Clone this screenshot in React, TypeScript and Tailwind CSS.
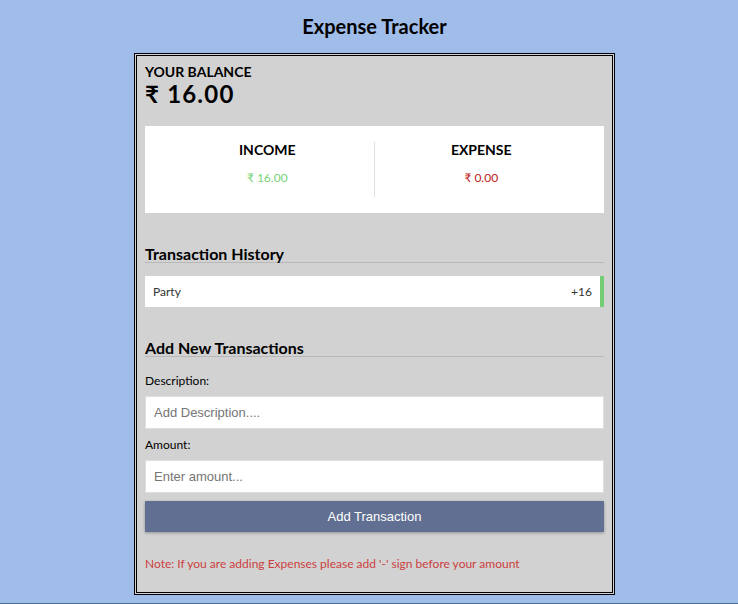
import { useState } from "react";

const headingClass = "mt-[33px] border-b border-[#b8b8b8] text-base leading-4 font-bold";
const labelClass = "block text-xs leading-4";
const inputClass =
  "mt-[7px] block h-[33px] w-full border border-[#dedede] bg-white px-2 font-['Liberation_Sans',Arial,sans-serif] text-[13px] text-black outline-none placeholder:text-[#757575]";

const transactions = [{ id: 1, text: "Party", amount: "+16" }];

export default function App() {
  const [description, setDescription] = useState("");
  const [amount, setAmount] = useState("");

  return (
    <div className="flex min-h-screen flex-col items-center border-b border-[#4b6a94] bg-[#a0bdea] pt-[14px] pb-2 pl-[11px] font-['Lato',sans-serif] text-black">
      <h1 className="text-xl leading-6 font-bold">Expense Tracker</h1>
      <main className="mt-[15px] w-full max-w-[481px] border-3 border-double border-black bg-[#d2d2d2] px-2 pt-2 pb-5">
        <h2 className="text-sm leading-4 font-bold">YOUR BALANCE</h2>
        <p className="text-2xl leading-7 font-bold tracking-wider">₹ 16.00</p>

        <section className="mt-[18px] grid h-[87px] grid-cols-2 bg-white p-4 text-center">
          <div className="border-r border-[#dedede]">
            <h3 className="text-sm leading-4 font-bold">INCOME</h3>
            <p className="mt-3 text-xs leading-4 text-[#78d278]">₹ 16.00</p>
          </div>
          <div>
            <h3 className="text-sm leading-4 font-bold">EXPENSE</h3>
            <p className="mt-3 text-xs leading-4 text-[#c02020]">₹ 0.00</p>
          </div>
        </section>

        <h3 className={headingClass}>Transaction History</h3>
        <ul className="mt-[13px]">
          {transactions.map((item) => (
            <li
              key={item.id}
              className="flex h-[31px] items-center justify-between border-r-4 border-[#74cc74] bg-white px-2 text-xs leading-4 text-[#333333]"
            >
              <span>{item.text}</span>
              <span>{item.amount}</span>
            </li>
          ))}
        </ul>

        <h3 className={headingClass}>Add New Transactions</h3>
        <form className="mt-4" onSubmit={(e) => e.preventDefault()}>
          <label htmlFor="description" className={labelClass}>
            Description:
          </label>
          <input
            id="description"
            type="text"
            value={description}
            onChange={(e) => setDescription(e.target.value)}
            placeholder="Add Description...."
            className={inputClass}
          />
          <label htmlFor="amount" className={"mt-2 " + labelClass}>
            Amount:
          </label>
          <input
            id="amount"
            type="text"
            inputMode="numeric"
            value={amount}
            onChange={(e) => setAmount(e.target.value)}
            placeholder="Enter amount..."
            className={inputClass}
          />
          <button
            type="submit"
            className="mt-2 block h-[31px] w-full bg-[#617092] font-['Liberation_Sans',Arial,sans-serif] text-[13px] text-white shadow-[0_1px_3px_rgba(0,0,0,0.3)]"
          >
            Add Transaction
          </button>
        </form>
        <p className="mt-6 text-xs leading-4 text-[#cc3f3f]">
          Note: If you are adding Expenses please add '-' sign before your amount
        </p>
      </main>
    </div>
  );
}
